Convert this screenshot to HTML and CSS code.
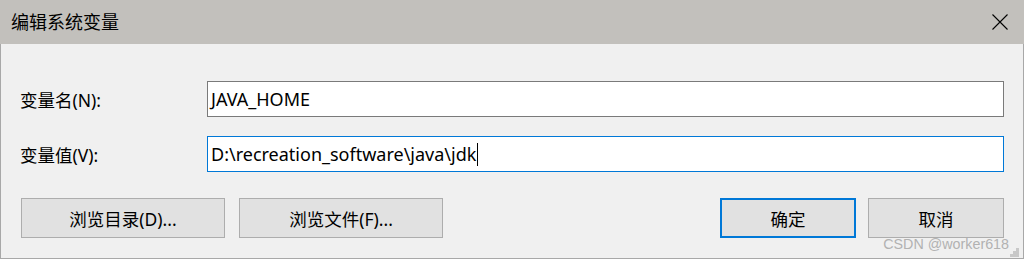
FILE: index.html
```html
<!DOCTYPE html>
<html lang="zh-CN">
<head>
<meta charset="utf-8">
<title>编辑系统变量</title>
<link rel="stylesheet" href="styles.css">
</head>
<body>
<div class="dialog">
  <div class="titlebar">
    <span class="title">编辑系统变量</span>
    <svg class="close" width="16" height="16" viewBox="0 0 16 16"><path d="M0.5 0.5 L15.5 15.5 M15.5 0.5 L0.5 15.5" stroke="#000" stroke-width="1.1" fill="none"/></svg>
  </div>
  <div class="content">
    <div class="fields">
      <label class="label">变量名(N):</label>
      <div class="input">JAVA_HOME</div>
      <label class="label">变量值(V):</label>
      <div class="input focused">D:\recreation_software\java\jdk<span class="caret"></span></div>
    </div>
    <div class="buttons">
      <div class="group">
        <div class="btn wide">浏览目录(D)...</div>
        <div class="btn wide">浏览文件(F)...</div>
      </div>
      <div class="group right">
        <div class="btn default">确定</div>
        <div class="btn">取消</div>
      </div>
    </div>
  </div>
  <div class="watermark">CSDN @worker618</div>
  <svg class="grip" width="10" height="10" viewBox="0 0 10 10">
    <rect x="6" y="0" width="3" height="3" fill="#c8c8c8"/>
    <rect x="3" y="3" width="3" height="3" fill="#c8c8c8"/>
    <rect x="6" y="3" width="3" height="3" fill="#c8c8c8"/>
    <rect x="0" y="6" width="3" height="3" fill="#c8c8c8"/>
    <rect x="3" y="6" width="3" height="3" fill="#c8c8c8"/>
    <rect x="6" y="6" width="3" height="3" fill="#c8c8c8"/>
  </svg>
</div>
</body>
</html>
```

FILE: styles.css
```css
html, body {
  margin: 0;
  padding: 0;
  background: #ffffff;
}
body {
  font-family: "Noto Sans", "Noto Sans CJK SC", sans-serif;
  color: #000;
}
.dialog {
  position: relative;
  width: 1024px;
  height: 259px;
  box-sizing: border-box;
  background: #f0f0f0;
  border-left: 1px solid #a8a8a8;
  border-right: 1px solid #a8a8a8;
  border-bottom: 1px solid #a8a8a8;
}
.titlebar {
  height: 44px;
  background: #c2c0bc;
  display: flex;
  align-items: center;
  justify-content: space-between;
  padding: 0 16px 0 11px;
  margin-left: -1px;
  margin-right: -1px;
}
.title {
  font-family: "Noto Sans CJK SC", sans-serif;
  font-size: 18px;
  line-height: 1;
  position: relative;
  top: -1px;
}
.close {
  display: block;
}
.content {
  padding: 37px 19px 0 19px;
}
.fields {
  display: grid;
  grid-template-columns: 187px 1fr;
  row-gap: 19px;
  align-items: center;
}
.label {
  font-size: 17.5px;
  padding-top: 1px;
}
.input {
  height: 36px;
  box-sizing: border-box;
  border: 1px solid #7a7a7a;
  background: #fff;
  font-size: 18px;
  line-height: 32px;
  padding-left: 3px;
  display: flex;
  align-items: center;
}
.input.focused {
  border-color: #0078d7;
}
.caret {
  display: inline-block;
  width: 1px;
  height: 23px;
  background: #000;
  margin-left: 1px;
}
.buttons {
  display: flex;
  justify-content: space-between;
  margin-top: 26px;
  padding-left: 1px;
}
.group {
  display: flex;
  gap: 14px;
}
.group.right {
  gap: 12px;
}
.btn {
  width: 136px;
  height: 40px;
  box-sizing: border-box;
  border: 1px solid #adadad;
  background: #e1e1e1;
  display: flex;
  align-items: center;
  justify-content: center;
  font-size: 17.5px;
}
.btn.wide {
  width: 204px;
}
.btn.default {
  border: 2px solid #0078d7;
}
.watermark {
  position: absolute;
  right: 14px;
  bottom: 7px;
  font-family: "Liberation Sans", sans-serif;
  font-size: 14.3px;
  color: #b2b2b2;
  line-height: 1;
}
.grip {
  position: absolute;
  right: 3px;
  bottom: 0px;
}
```
